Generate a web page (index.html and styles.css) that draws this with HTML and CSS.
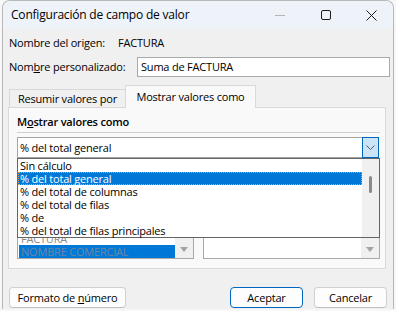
FILE: index.html
```html
<!DOCTYPE html>
<html lang="es">
<head>
<meta charset="utf-8">
<title>Configuración de campo de valor</title>
<link rel="stylesheet" href="styles.css">
</head>
<body>
<div class="window">
  <div class="titlebar">
    <span class="title">Configuración de campo de valor</span>
    <div class="controls">
      <span class="ctl"><svg width="10" height="10" viewBox="0 0 10 10"><line x1="0" y1="5.5" x2="10" y2="5.5" stroke="#b5b5b5" stroke-width="1"/></svg></span>
      <span class="ctl"><svg width="10" height="10" viewBox="0 0 10 10"><rect x="0.5" y="0.5" width="9" height="9" rx="1.5" fill="none" stroke="#1b1b1b" stroke-width="1"/></svg></span>
      <span class="ctl ctl-close"><svg width="11" height="11" viewBox="0 0 11 11"><path d="M0.5 0.5 L10.5 10.5 M10.5 0.5 L0.5 10.5" stroke="#1b1b1b" stroke-width="1" fill="none"/></svg></span>
    </div>
  </div>
  <div class="content">
    <div class="row">
      <span class="lbl-origin">Nombre del origen:</span><span>FACTURA</span>
    </div>
    <div class="row custom">
      <span class="lbl-custom">Nom<u>b</u>re personalizado:</span>
      <div class="input">Suma de FACTURA</div>
    </div>
    <div class="tabs">
      <div class="tab">Resumir valores por</div>
      <div class="tab active">Mostrar valores como</div>
    </div>
    <div class="panel">
      <div class="group-label">M<u>o</u>strar valores como</div>
      <div class="sep"></div>
      <div class="combo-wrap">
        <div class="combo">
          <span class="combo-text">% del total general</span>
          <span class="combo-btn"><svg width="9" height="5" viewBox="0 0 9 5"><path d="M0.5 0.5 L4.5 4.5 L8.5 0.5" stroke="#5a5a5a" stroke-width="1" fill="none"/></svg></span>
        </div>
        <div class="dropdown">
          <div class="list">
            <div class="item">Sin cálculo</div>
            <div class="item sel">% del total general</div>
            <div class="item">% del total de columnas</div>
            <div class="item">% del total de filas</div>
            <div class="item">% de</div>
            <div class="item">% del total de filas principales</div>
          </div>
          <div class="vscroll"><div class="thumb"></div></div>
        </div>
      </div>
      <div class="base">
        <div class="base-col">
          <div class="base-label"></div>
          <div class="lbox">
            <div class="lbox-items">
              <div class="litem litem-clip"><span class="clip-text">FACTURA</span></div>
              <div class="litem lsel">NOMBRE COMERCIAL</div>
            </div>
            <div class="lbox-scroll"><span class="down"></span></div>
          </div>
        </div>
        <div class="base-col">
          <div class="base-label"></div>
          <div class="lbox">
            <div class="lbox-items"></div>
            <div class="lbox-scroll"><span class="down"></span></div>
          </div>
        </div>
      </div>
    </div>
    <div class="buttons">
      <div class="btn btn-format">Formato de <u>n</u>úmero</div>
      <div class="btn btn-ok">Aceptar</div>
      <div class="btn btn-cancel">Cancelar</div>
    </div>
  </div>
</div>
</body>
</html>
```
FILE: styles.css
```css
* { box-sizing: border-box; }
html, body { margin: 0; padding: 0; }
body {
  width: 396px;
  height: 311px;
  overflow: hidden;
  background: #f7f7f7;
  font-family: "Open Sans", "Noto Sans", sans-serif;
  font-size: 11px;
  letter-spacing: -0.2px;
  color: #000;
}
u { text-decoration: underline; text-underline-offset: 1px; }

.window {
  margin-left: 2px;
  width: 392px;
  height: 309px;
  border: 1px solid #b8b8b8;
  border-bottom: none;
  border-radius: 8px 8px 0 0;
  overflow: hidden;
  background: #f0f0f0;
}
.titlebar {
  height: 28px;
  background: #eef3fa;
  display: flex;
  align-items: center;
  padding-left: 8px;
}
.title { font-size: 12px; line-height: 16px; }
.controls { margin-left: auto; display: flex; height: 100%; }
.ctl { width: 46px; display: flex; align-items: center; justify-content: center; }
.ctl-close { width: 44px; }

.content { padding: 0 3px 0 6px; }
.row { display: flex; align-items: center; line-height: 16px; margin-top: 6px; }
.lbl-origin { width: 109px; }
.custom { height: 20px; }
.lbl-custom { width: 128px; }
.input {
  flex: 1;
  height: 20px;
  border: 1px solid #a9a9a9;
  background: #fff;
  padding-left: 3px;
  line-height: 18px;
}

.tabs { display: flex; align-items: flex-end; margin-top: 8px; height: 22px; }
.tab {
  width: 116px;
  height: 18px;
  border-top: 1px solid #d9d9d9;
  border-left: 1px solid #d9d9d9;
  text-align: center;
  line-height: 17px;
}
.tab.active {
  width: 131px;
  height: 23px;
  border-right: 1px solid #d9d9d9;
  background: #f9f9f9;
  margin-bottom: -1px;
  position: relative;
  z-index: 1;
  line-height: 21px;
}

.panel {
  margin-left: -1px;
  margin-right: 4px;
  height: 162px;
  border: 1px solid #d9d9d9;
  background: #f9f9f9;
  padding: 6px 5px 0 8px;
}
.group-label { font-weight: 600; line-height: 16px; }
.sep { margin-top: 2px; height: 1px; background: #d0d0d0; }

.combo-wrap { margin-top: 4px; margin-right: 1px; position: relative; }
.combo {
  display: flex;
  height: 21px;
  border: 1px solid #a6a6a6;
  background: #fff;
}
.combo-text { flex: 1; padding-left: 2px; line-height: 19px; }
.combo-btn {
  width: 17px;
  margin: -1px -1px -1px 0;
  border: 1px solid #0067c0;
  background: #cce4f7;
  display: flex;
  align-items: center;
  justify-content: center;
}
.dropdown {
  position: absolute;
  top: 21px;
  left: 0;
  width: 363px;
  height: 80px;
  border: 1px solid #646464;
  background: #fff;
  display: flex;
  z-index: 2;
}
.list { flex: 1; }
.item { height: 13px; line-height: 13px; padding-left: 2px; white-space: nowrap; }
.item.sel {
  background: #0078d7;
  color: #fff;
  border: 1px dotted #ff9a3c;
  line-height: 11px;
  padding-left: 1px;
}
.vscroll { width: 17px; background: #f0f0f0; }
.thumb {
  margin: 17px auto 0;
  width: 3px;
  height: 17px;
  background: #8a8a8a;
  border-radius: 1.5px;
}

.base { margin-top: 8px; display: flex; gap: 9px; }
.base-col { width: 177px; }
.base-label { height: 16px; }
.lbox {
  height: 77px;
  border: 1px solid #a9a9a9;
  background: #fff;
  display: flex;
}
.lbox-items {
  flex: 1;
  display: flex;
  flex-direction: column;
  justify-content: flex-end;
  padding-left: 1px;
  overflow: hidden;
}
.litem { height: 13px; line-height: 13px; color: #8a8a8a; padding-left: 2px; }
.litem-clip { height: 8px; overflow: hidden; }
.clip-text { display: block; height: 8px; line-height: 3px; overflow: hidden; }
.litem.lsel { background: #0078d7; color: #6c87a3; }
.lbox-scroll {
  width: 18px;
  background: #f0f0f0;
  display: flex;
  flex-direction: column;
  justify-content: flex-end;
  align-items: center;
}
.down {
  width: 0;
  height: 0;
  margin-bottom: 6px;
  border-left: 4px solid transparent;
  border-right: 4px solid transparent;
  border-top: 5px solid #a3a3a3;
}

.buttons { display: flex; margin-top: 18px; }
.btn {
  height: 21px;
  border: 1px solid #d0d0d0;
  border-bottom-color: #c0c0c0;
  border-radius: 4px;
  background: #fdfdfd;
  line-height: 19px;
  text-align: center;
}
.btn-format { width: 117px; }
.btn-ok { width: 73px; margin-left: auto; border-color: #0067c0; }
.btn-cancel { width: 73px; margin-left: 11px; margin-right: 3px; }
```
